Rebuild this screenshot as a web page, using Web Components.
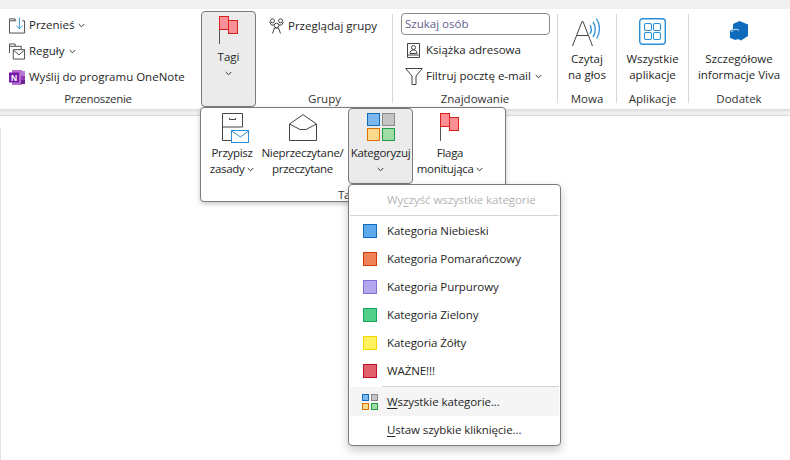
<!DOCTYPE html>
<html lang="pl"><head><meta charset="utf-8">
<style>
html,body{margin:0;padding:0;width:790px;height:460px;overflow:hidden;background:#fff}
body{font:11.5px/16px "Open Sans","Noto Sans",sans-serif;color:#262626;position:relative}
</style></head><body>
<app-shell></app-shell>
<script>
const FLAG=`<svg width="20" height="28" viewBox="0 0 20 28"><path d="M.5 0v28" stroke="#555" fill="none"/><rect x=".5" y=".5" width="9" height="13" fill="#fd8f96" stroke="#d8201c"/><rect x="9.500" y="4.500" width="9" height="13" fill="#fd8f96" stroke="#d8201c"/></svg>`;
const CHEV=`<svg width="7" height="5" viewBox="0 0 7 5" style="vertical-align:1px"><path d="M.7 1l2.800 2.800L6.300 1" fill="none" stroke="#333" stroke-width="1"/></svg>`;
const ICONS={
flag:FLAG,
move:`<svg width="18" height="17" viewBox="0 0 18 17" fill="none"><path d="M7.500 3.500H.5V16.500h16V3.500H14M.5 3V1.500h6V3" stroke="#444"/><path d="M11 0v12M7.500 8.500l3.500 3.500 3.500-3.500" stroke="#2a8fd8"/></svg>`,
rules:`<svg width="18" height="17" viewBox="0 0 18 17" fill="none" stroke="#444"><path d="M.5 10V.5h6V3H13v3M.5 3h6"/><path d="M4.500 6.500h12v10h-12zM4.500 7l6 5 6-5"/></svg>`,
onenote:`<svg width="17" height="15" viewBox="0 0 17 15"><rect x="3" y="0" width="10" height="15" fill="#b56fd0"/><rect x="12" y="1" width="4" height="4.500" fill="#ba7bd6"/><rect x="12" y="5.500" width="4" height="4.500" fill="#9440b8"/><rect x="12" y="10" width="4" height="4" fill="#6c2590"/><rect x="0" y="2.500" width="10" height="10" fill="#7719aa"/><text x="5" y="10.500" font-size="8.500" font-weight="700" fill="#fff" text-anchor="middle" font-family="Liberation Sans">N</text></svg>`,
groups:`<svg width="16" height="16" viewBox="0 0 16 16" fill="none" stroke="#444"><circle cx="3.500" cy="2.800" r="2"/><circle cx="11.500" cy="2.800" r="2"/><circle cx="7.500" cy="7.500" r="2.300"/><path d="M.5 4l2 3h2.500M14.500 4l-2 3H10M3.500 15.500L5.500 10h4l2 5.500"/></svg>`,
book:`<svg width="13" height="15" viewBox="0 0 13 15" fill="none" stroke="#444"><path d="M.5 12V.5h12V12zM.5 12v2.500h12V12"/><circle cx="6.500" cy="4.500" r="2"/><path d="M3 10.500c0-2.300 1.500-3.500 3.500-3.500s3.500 1.200 3.500 3.500z"/></svg>`,
filter:`<svg width="18" height="17" viewBox="0 0 18 17" fill="none" stroke="#444"><path d="M.7 .5h16.600l-6.300 7.500v8.500H7V8z"/></svg>`,
read:`<svg width="30" height="28" viewBox="0 0 30 28" fill="none"><path d="M.5 28L10 3.500h1L20.500 28M4.500 17.500h12" stroke="#444"/><path d="M18 7c1.500 2.500 1.500 6.500 0 9M21 4c3 4 3 11 0 15M24.500 .5c4 6 4 14 0 20" stroke="#2a8fd8" stroke-width="1.300"/></svg>`,
apps:`<svg width="27" height="27" viewBox="0 0 27 27" fill="none" stroke="#2a8fd8" stroke-width="1.100"><rect x=".7" y=".7" width="25.600" height="25.600" rx="3" stroke-width="1.400"/><rect x="5.500" y="5.500" width="7" height="7" rx="1.500"/><rect x="14.500" y="5.500" width="7" height="7" rx="1.500"/><rect x="5.500" y="14.500" width="7" height="7" rx="1.500"/><rect x="14.500" y="14.500" width="7" height="7" rx="1.500"/></svg>`,
viva:`<svg width="19" height="20" viewBox="0 0 19 20" style="margin-top:3px"><path d="M9.500 0l8.500 3.500V15l-7 4.500-3-1.500-2.500 1-5.500-2V10l3-2V3z" fill="#0f6cbd"/><path d="M1.500 11c1.500-3 5.500-3.500 7.500-1.500" stroke="#fff" stroke-width=".9" fill="none"/></svg>`,
assign:`<svg width="28" height="30" viewBox="0 0 28 30" fill="none" style="margin-left:7px"><path d="M.5 14V.5h20V14M.5 14h20M.5 14V27.500h9" stroke="#444"/><path d="M7.500 5v1.500h6V5" stroke="#444"/><rect x="9.500" y="17.500" width="17" height="12" fill="#fff" stroke="#2a8fd8"/><path d="M10 18l8.500 6 8-6" stroke="#2a8fd8"/></svg>`,
mail:`<svg width="28" height="27" viewBox="0 0 28 27" fill="none" stroke="#444" style="margin-top:1px"><path d="M.5 26.500V10L14 .7 27.500 10v16.500zM.5 10L11 15.500h6L27.500 10"/></svg>`,
cat:`<svg width="28" height="28" viewBox="0 0 28 28"><rect x=".5" y=".5" width="12" height="12" fill="#7cb8ee" stroke="#0f6cbd"/><rect x="15.500" y=".5" width="12" height="12" fill="#c4c4c4" stroke="#8a8a8a"/><rect x=".5" y="15.500" width="12" height="12" fill="#fadb8c" stroke="#e07000"/><rect x="15.500" y="15.500" width="12" height="12" fill="#a0dda6" stroke="#219c4a"/></svg>`,
catsm:`<svg width="16" height="16" viewBox="0 0 16 16" style="margin-left:-1px"><rect x=".5" y=".5" width="6" height="6" fill="#7cb8ee" stroke="#0f6cbd"/><rect x="9.500" y=".5" width="6" height="6" fill="#c4c4c4" stroke="#8a8a8a"/><rect x=".5" y="9.500" width="6" height="6" fill="#fadb8c" stroke="#e07000"/><rect x="9.500" y="9.500" width="6" height="6" fill="#a0dda6" stroke="#219c4a"/></svg>`
};

class Base extends HTMLElement{
  render(css,html){const s=this.shadowRoot||this.attachShadow({mode:'open'});s.innerHTML=`<style>${css}</style>${html}`}
}
class RibbonSmall extends Base{connectedCallback(){
  const ic=ICONS[this.getAttribute('icon')]||'';
  this.render(`:host{display:flex;align-items:center;height:26px;white-space:nowrap}
  .i{display:flex;justify-content:center;width:var(--iw,17px);margin-right:var(--im,3px)}
  .c{margin-left:4px}`,
  `<span class="i">${ic}</span><slot></slot>${this.hasAttribute('menu')?`<span class="c">${CHEV}</span>`:''}`);
}}
class RibbonLarge extends Base{connectedCallback(){
  const ic=this.getAttribute('icon');
  this.render(`:host{display:flex;flex-direction:column;align-items:center;text-align:center;box-sizing:border-box;line-height:16px;white-space:nowrap}
  .i{height:var(--ih,33px);display:flex;align-items:flex-start;justify-content:center}`,
  `<span class="i">${ICONS[ic]}</span><slot></slot>`);
}}
class RibbonGroup extends Base{connectedCallback(){
  this.render(`:host{display:flex;flex-direction:column;box-sizing:border-box;height:89px;border-right:1px solid var(--sep,#d8d8d8);flex:none}
  .b{flex:1;min-height:0;display:flex;align-items:flex-start}
  .l{height:16px;margin-bottom:-4px;text-align:center;color:#333;white-space:nowrap;padding-right:var(--lp,0);letter-spacing:var(--ls,0)}`,
  `<div class="b"><slot></slot></div><div class="l">${this.getAttribute('label')}</div>`);
}}
class MenuItem extends Base{connectedCallback(){
  const col=this.getAttribute('swatch'),bd=this.getAttribute('bd'),ic=this.getAttribute('icon');
  this.render(`:host{display:flex;align-items:center;height:28px;padding-left:13px;color:#262626;white-space:nowrap;letter-spacing:-.08px}
  :host([hot]){background:#f5f5f5;height:29px}
  :host([off]){color:#b4b4b4}
  .g{width:24px;flex:none;display:flex}
  .s{width:12px;height:12px;border:1px solid}`,
  `<span class="g">${col?`<span class="s" style="background:${col};border-color:${bd}"></span>`:ic?ICONS[ic]:''}</span><slot></slot>`);
}}
class MenuSep extends Base{connectedCallback(){
  this.render(`:host{display:block;height:1px;background:#d4d4d4;margin-left:32px}`,'');
}}
class AppShell extends Base{connectedCallback(){
  this.render(`
  :host{display:block;width:790px;height:460px;position:relative;overflow:hidden;background:#fff}
  .top{height:9px;background:#f0f0f0}
  .rib{height:100px;background:#fff;display:flex;position:relative}
  .band{height:7px;box-sizing:border-box;background:linear-gradient(#dcdcdc,#f0f0f0 60%);border-bottom:1px solid #d8d8d8}
  .doc{height:344px;box-sizing:border-box;padding-top:12px}
  .doc div{width:1px;height:100%;background:#e2e2e2}
  ribbon-group{margin-top:5px}
  .col{display:flex;flex-direction:column}
  .g1{width:200px;--sep:transparent;--lp:3px;--ls:-.3px}.g1 .col{margin-top:-2px;padding-left:9px}
  .g2{width:60px;--sep:transparent}
  .tagbtn{width:55px;height:96px;box-sizing:border-box;border:1px solid #7b7b7b;border-radius:4px;background:#ebebeb;margin:-3px 0 0 1px;display:flex;flex-direction:column;align-items:center;padding-top:4px}
  .g3{width:133px;--lp:3px}.g3 ribbon-small{margin-left:8px;height:24px}
  .g4{width:165px}
  .search{width:149px;height:22px;box-sizing:border-box;border:1px solid #8a8a8a;border-radius:4px;margin:-1px 0 2px 8px;padding:0 3px;line-height:20px;color:#605e8c;flex:none}
  .g4 .col{flex:1}.g4 ribbon-small{margin-left:11px;--iw:19px;--im:3px}
  .g5{width:59px}.g6{width:72px}.g7{width:101px;--sep:transparent}
  .g5 ribbon-large,.g6 ribbon-large,.g7 ribbon-large{flex:1;padding-top:4px}
  .panel{position:absolute;left:200px;top:107px;width:306px;height:95px;box-sizing:border-box;background:#fff;border:1px solid #7b7b7b;border-radius:4px;box-shadow:0 2px 5px rgba(0,0,0,.22);display:flex;padding-left:2px;letter-spacing:-.3px}
  .panel ribbon-large{--ih:32px;padding-top:5px}
  .a{width:58px}.b2{width:83px}
  .panel .cbtn{width:65px;height:76px;border:1px solid #7b7b7b;border-radius:4px;background:#ebebeb;margin-left:4px;padding-top:4px}
  .d{width:74px}
  .cv{display:block;height:16px}
  .tl{position:absolute;left:137px;top:79px;color:#333}
  .menu{position:absolute;left:348px;top:184px;width:213px;height:262px;box-sizing:border-box;background:#fff;border:1px solid #7b7b7b;border-radius:4px;box-shadow:0 4px 10px rgba(0,0,0,.22);padding:1px}
  .menu u{text-underline-offset:2px}
  .m1{margin:1px 0}.m2{margin-top:1px}
  `,`
  <div class="top"></div>
  <div class="rib">
    <ribbon-group class="g1" label="Przenoszenie"><div class="col">
      <ribbon-small icon="move" menu>Przenieś</ribbon-small>
      <ribbon-small icon="rules" menu>Reguły</ribbon-small>
      <ribbon-small icon="onenote">Wyślij do programu OneNote</ribbon-small>
    </div></ribbon-group>
    <ribbon-group class="g2" label=""><div class="tagbtn"><ribbon-large icon="flag">Tagi<span class="cv">${CHEV}</span></ribbon-large></div></ribbon-group>
    <ribbon-group class="g3" label="Grupy"><ribbon-small icon="groups">Przeglądaj grupy</ribbon-small></ribbon-group>
    <ribbon-group class="g4" label="Znajdowanie"><div class="col">
      <div class="search">Szukaj osób</div>
      <ribbon-small icon="book">Książka adresowa</ribbon-small>
      <ribbon-small icon="filter" menu>Filtruj pocztę e-mail</ribbon-small>
    </div></ribbon-group>
    <ribbon-group class="g5" label="Mowa"><ribbon-large icon="read">Czytaj<br>na głos</ribbon-large></ribbon-group>
    <ribbon-group class="g6" label="Aplikacje"><ribbon-large icon="apps">Wszystkie<br>aplikacje</ribbon-large></ribbon-group>
    <ribbon-group class="g7" label="Dodatek"><ribbon-large icon="viva">Szczegółowe<br>informacje Viva</ribbon-large></ribbon-group>
  </div>
  <div class="band"></div>
  <div class="doc"><div></div></div>
  <div class="panel">
    <ribbon-large class="a" icon="assign">Przypisz<br><span>zasady ${CHEV}</span></ribbon-large>
    <ribbon-large class="b2" icon="mail">Nieprzeczytane/<br>przeczytane</ribbon-large>
    <ribbon-large class="cbtn" icon="cat">Kategoryzuj<span class="cv">${CHEV}</span></ribbon-large>
    <ribbon-large class="d" icon="flag">Flaga<br><span>monitująca ${CHEV}</span></ribbon-large>
    <span class="tl">Tagi</span>
  </div>
  <div class="menu">
    <menu-item off>Wy<u>c</u>zyść wszystkie kategorie</menu-item>
    <menu-sep class="m1"></menu-sep>
    <menu-item swatch="#5ea8ec" bd="#0f6cbd">Kategoria Niebieski</menu-item>
    <menu-item swatch="#ef8259" bd="#d13a05">Kategoria Pomarańczowy</menu-item>
    <menu-item swatch="#b3a8ee" bd="#8270d8">Kategoria Purpurowy</menu-item>
    <menu-item swatch="#52cf8b" bd="#18a558">Kategoria Zielony</menu-item>
    <menu-item swatch="#fff15f" bd="#f5d800">Kategoria Żółty</menu-item>
    <menu-item swatch="#e0606c" bd="#c0102a">WAŻNE!!!</menu-item>
    <menu-sep class="m2"></menu-sep>
    <menu-item hot icon="catsm"><span><u>W</u>szystkie kategorie...</span></menu-item>
    <menu-item><span><u>U</u>staw szybkie kliknięcie...</span></menu-item>
  </div>`);
}}
customElements.define('ribbon-small',RibbonSmall);
customElements.define('ribbon-large',RibbonLarge);
customElements.define('ribbon-group',RibbonGroup);
customElements.define('menu-item',MenuItem);
customElements.define('menu-sep',MenuSep);
customElements.define('app-shell',AppShell);
</script>
</body></html>
